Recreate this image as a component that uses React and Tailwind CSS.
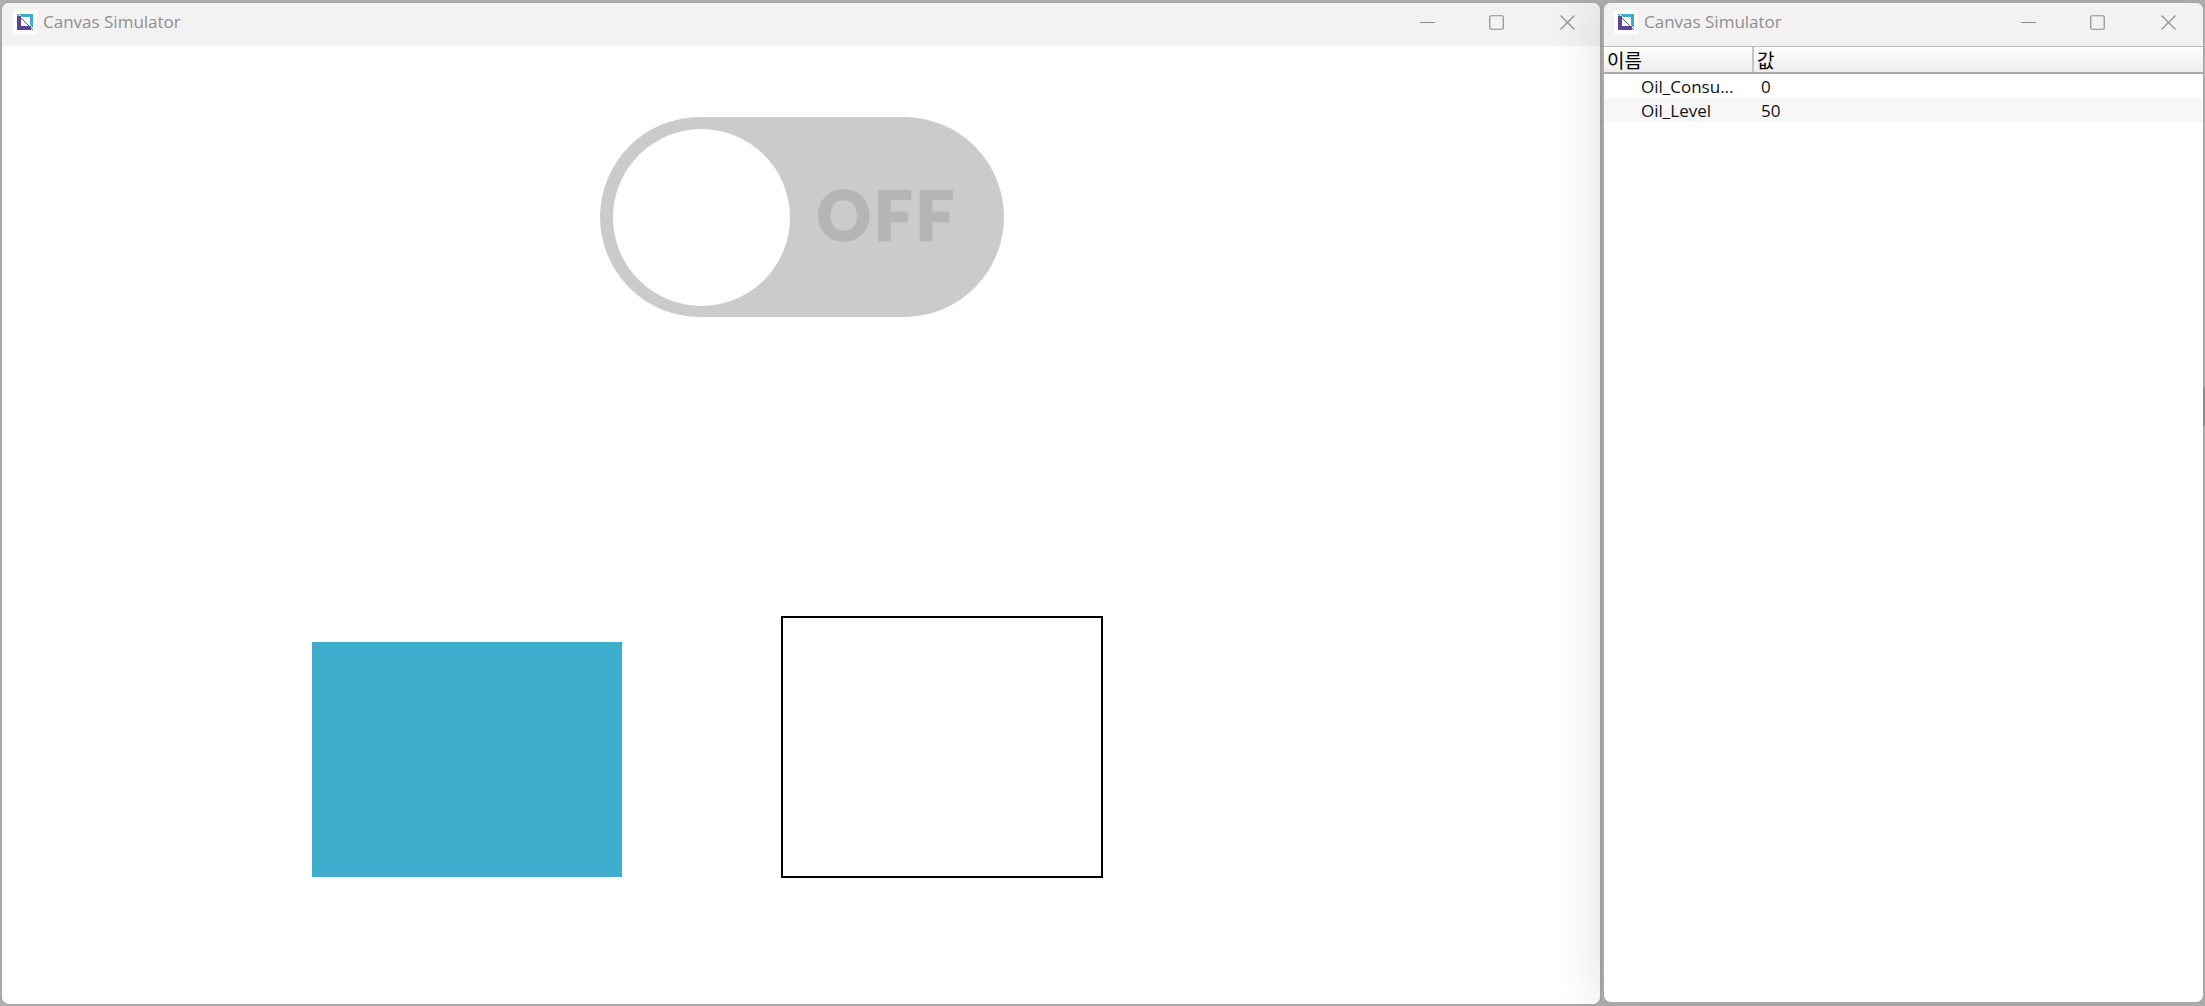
import React from 'react';

const AppIcon = () => (
    <div className="w-6 h-6 bg-white flex items-center justify-center shrink-0">
        <svg width="18" height="18" viewBox="0 0 18 18">
            <path d="M1 3 L5 3 L5 13 L15 13 L15 17 L1 17 Z" fill="#5b4491" />
            <path d="M3 1 L17 1 L17 15 L14 12 L14 4 L6 4 Z" fill="#3fa9cf" />
            <path d="M1 1 L17 17" stroke="#5d5d6e" strokeWidth="1" />
        </svg>
    </div>
);

const WindowControls = ({ className }) => (
    <div className={`flex items-center ${className}`}>
        <svg width="15" height="15" viewBox="0 0 15 15" className="block">
            <path d="M0 7.5 H15" stroke="#8c8c8c" strokeWidth="1" />
        </svg>
        <svg width="15" height="15" viewBox="0 0 15 15" className="block ml-[54px]">
            <rect x="0.75" y="0.75" width="13.5" height="13.5" rx="1.5" fill="none" stroke="#8c8c8c" strokeWidth="1.2" />
        </svg>
        <svg width="15" height="15" viewBox="0 0 15 15" className="block ml-[56px]">
            <path d="M0.5 0.5 L14.5 14.5 M14.5 0.5 L0.5 14.5" stroke="#8c8c8c" strokeWidth="1.1" />
        </svg>
    </div>
);

const TitleBar = ({ controlsClass, iconClass }) => (
    <div className="h-[43px] pb-[5px] bg-[#f2f2f2] flex items-center shrink-0">
        <div className={iconClass}><AppIcon /></div>
        <span className="ml-[6px] text-[17px] text-[#8f8f8f] font-['Open_Sans',sans-serif]">Canvas Simulator</span>
        <WindowControls className={controlsClass} />
    </div>
);

const rows = [
    { name: 'Oil_Consu...', value: '0' },
    { name: 'Oil_Level', value: '50' },
];

export default function App() {
    return (
        <div className="relative w-[2205px] h-[1006px] bg-[#b0b0b0] flex overflow-hidden pt-[1px]">
            {/* Main simulator window */}
            <div className="w-[1602px] h-[1005px] bg-white border-2 border-[#a9a9a9] rounded-[9px] overflow-hidden flex flex-col shrink-0">
                <TitleBar iconClass="ml-[11px]" controlsClass="ml-auto mr-[25px]" />
                <div className="relative flex-1">
                    {/* Toggle */}
                    <div className="absolute left-[598px] top-[71px] w-[404px] h-[200px] rounded-full bg-[#cbcbcb]">
                        <div className="absolute left-[13px] top-[12px] w-[177px] h-[177px] rounded-full bg-white" />
                        <span className="absolute left-[217px] top-[48px] text-[66px] leading-[100px] font-black tracking-[4px] [-webkit-text-stroke:2.5px_#b5b5b5] text-[#b5b5b5] font-['Lato',sans-serif]">OFF</span>
                    </div>
                    <div className="absolute left-[310px] top-[596px] w-[310px] h-[235px] bg-[#3fadce]" />
                    <div className="absolute left-[779px] top-[570px] w-[322px] h-[262px] border-2 border-black" />
                </div>
            </div>

            {/* Watch window */}
            <div className="flex-1 h-[1003px] bg-white border-2 border-[#a9a9a9] rounded-[9px] overflow-hidden flex flex-col shadow-[-4px_0_50px_rgba(0,0,0,0.12)] z-10">
                <TitleBar iconClass="ml-[10px]" controlsClass="ml-auto mr-[27px]" />
                <div className="flex-1 flex flex-col">
                    <div className="h-[28px] flex border-t border-[#bdbdbd] border-b-2 border-b-[#a9a9a9] bg-gradient-to-b from-white to-[#ececec] text-[19px] leading-[26px] text-black font-['Noto_Sans_CJK_KR',sans-serif]">
                        <div className="w-[150px] pl-[3px] border-r-2 border-[#c4c4c4]">이름</div>
                        <div className="pl-[3px]">값</div>
                    </div>
                    {rows.map((r, i) => (
                        <div key={r.name} className={`h-[24px] pt-[1px] flex items-center text-[17px] text-[#111] font-['Open_Sans',sans-serif] ${i % 2 ? 'bg-[#f7f7f7]' : 'bg-white'}`}>
                            <span className="w-[152px] pl-[37px] whitespace-nowrap">{r.name}</span>
                            <span className="pl-[5px]">{r.value}</span>
                        </div>
                    ))}
                </div>
            </div>

            {/* Resize grip on the window edge */}
            <div className="absolute right-0 top-[387px] w-[2px] h-[39px] bg-[#8c8c8c] z-20" />
        </div>
    );
}
